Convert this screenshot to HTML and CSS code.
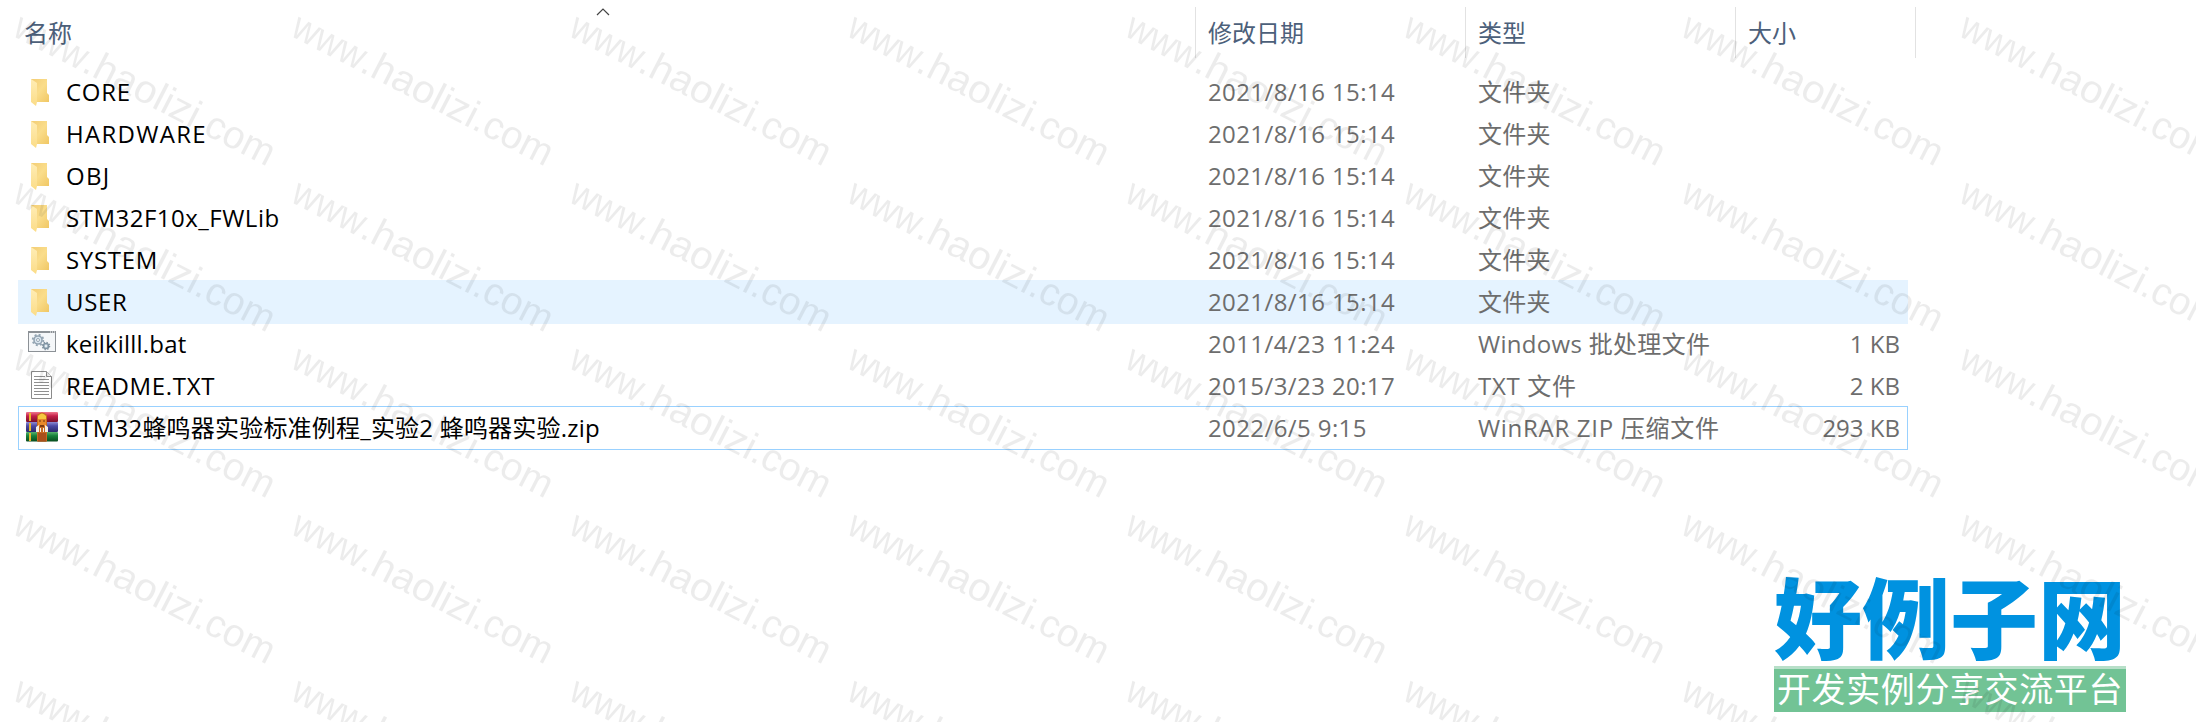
FILE: index.html
```
<!DOCTYPE html>
<html lang="zh-CN">
<head>
  <meta charset="UTF-8" />
  <meta name="viewport" content="width=device-width, initial-scale=1.0"/>
  <title>文件列表</title>
  <link rel="stylesheet" href="styles.css">
</head>
<body>
  <!-- icons -->
  <svg class="defs" width="0" height="0">
    <defs>
      <linearGradient id="folderBack" x1="0" y1="0" x2="1" y2="1">
        <stop offset="0" stop-color="#f3cd74"/>
        <stop offset="0.5" stop-color="#fadd8b"/>
        <stop offset="1" stop-color="#f0c764"/>
      </linearGradient>
      <linearGradient id="folderFront" x1="0" y1="0" x2="0" y2="1">
        <stop offset="0" stop-color="#ffedb5"/>
        <stop offset="1" stop-color="#fbdc87"/>
      </linearGradient>
      <linearGradient id="bookRed" x1="0" y1="0" x2="0" y2="1">
        <stop offset="0" stop-color="#f0788e"/>
        <stop offset="0.4" stop-color="#c4204a"/>
        <stop offset="1" stop-color="#78102c"/>
      </linearGradient>
      <linearGradient id="bookBlue" x1="0" y1="0" x2="0" y2="1">
        <stop offset="0" stop-color="#8c8ad2"/>
        <stop offset="0.4" stop-color="#4a48a4"/>
        <stop offset="1" stop-color="#29286a"/>
      </linearGradient>
      <linearGradient id="bookGreen" x1="0" y1="0" x2="0" y2="1">
        <stop offset="0" stop-color="#57b16d"/>
        <stop offset="0.4" stop-color="#16813a"/>
        <stop offset="1" stop-color="#074c1e"/>
      </linearGradient>
      <symbol id="folder" viewBox="0 0 32 32">
        <path d="M5 3h16v14l2 2v7H5z" fill="url(#folderBack)"/>
        <path d="M5 3l6 4v19l-1 4-5-4z" fill="url(#folderFront)"/>
      </symbol>
      <symbol id="bat" viewBox="0 2 32 32">
        <rect x="2.5" y="5.5" width="27" height="20" fill="#f5f7f9" stroke="#8c9196"/>
        <path d="M2 6h28" stroke="#8c9196" stroke-width="2"/>
        <path d="M24 6h1M26 6h1M28 6h1" stroke="#fff"/>
        <circle cx="12" cy="14" r="4" fill="#dbe7f0" stroke="#94a5b3" stroke-width="1.6"/>
        <circle cx="12" cy="14" r="5.3" fill="none" stroke="#94a5b3" stroke-width="1.8" stroke-dasharray="2 2.16"/>
        <circle cx="12" cy="14" r="1.5" fill="#fff" stroke="#94a5b3"/>
        <circle cx="20" cy="20" r="2.6" fill="#b4c7d5" stroke="#8093a1" stroke-width="1.4"/>
        <circle cx="20" cy="20" r="3.6" fill="none" stroke="#8093a1" stroke-width="1.4" stroke-dasharray="1.4 1.43"/>
        <circle cx="20" cy="20" r="0.9" fill="#fff"/>
      </symbol>
      <symbol id="txt" viewBox="0 2 32 32">
        <path d="M5.500 3.500h15l5 5v22h-20z" fill="#fff" stroke="#8a8a8a"/>
        <path d="M20.500 3.500v5h5" fill="#f2f2f2" stroke="#8a8a8a"/>
        <path d="M8 8.500h11M8 11.500h15M8 14.500h15M8 17.500h15M8 20.500h15M8 23.500h15M8 26.500h15" stroke="#8f8f8f"/>
      </symbol>
      <symbol id="zip" viewBox="0 1 32 32">
        <rect x="0" y="1" width="32" height="10" rx="1" fill="url(#bookRed)"/>
        <rect x="0" y="11" width="32" height="10" rx="1" fill="url(#bookBlue)"/>
        <rect x="0" y="21" width="32" height="9.500" rx="1" fill="url(#bookGreen)"/>
        <path d="M4 2v8M4 12v8M4 22v8" stroke="#e9b52c" stroke-width="2"/>
        <path d="M11 4q5-5 10 0v26.500H11z" fill="#c76a20"/>
        <path d="M12 5q4-5 8 0v4h-8z" fill="#f7c740"/>
        <rect x="12" y="8" width="8" height="7" fill="#e8892b"/>
        <path d="M13 10h2M17 10h2" stroke="#6b3310"/>
        <path d="M10 16l3-2v7h-3zM22 16l-3-2v7h3z" fill="#f3eee6"/>
        <path d="M14 14h4v2h-4z" fill="#7d3a12"/>
        <path d="M14 17h1v4h-1zM17 17h1v4h-1z" fill="#f3eee6"/>
        <rect x="12" y="22" width="8" height="8.500" fill="#a9501c"/>
      </symbol>
    </defs>
  </svg>

  <div class="explorer">
    <div class="header">
      <div class="head name">名称
        <svg class="sort" width="14" height="8" viewBox="0 0 14 8"><path d="M1 7l6-6 6 6" fill="none" stroke="#444" stroke-width="1.2"/></svg>
      </div>
      <div class="head">修改日期</div>
      <div class="head">类型</div>
      <div class="head last">大小</div>
    </div>

    <div class="list">
      <div class="row">
        <div class="file"><svg class="icon"><use href="#folder"/></svg><span class="label caps">CORE</span></div>
        <div class="date">2021/8/16 15:14</div><div class="type">文件夹</div><div class="size"></div>
      </div>
      <div class="row">
        <div class="file"><svg class="icon"><use href="#folder"/></svg><span class="label caps wide">HARDWARE</span></div>
        <div class="date">2021/8/16 15:14</div><div class="type">文件夹</div><div class="size"></div>
      </div>
      <div class="row">
        <div class="file"><svg class="icon"><use href="#folder"/></svg><span class="label caps wide">OBJ</span></div>
        <div class="date">2021/8/16 15:14</div><div class="type">文件夹</div><div class="size"></div>
      </div>
      <div class="row">
        <div class="file"><svg class="icon"><use href="#folder"/></svg><span class="label mixed">STM32F10x_FWLib</span></div>
        <div class="date">2021/8/16 15:14</div><div class="type">文件夹</div><div class="size"></div>
      </div>
      <div class="row">
        <div class="file"><svg class="icon"><use href="#folder"/></svg><span class="label caps">SYSTEM</span></div>
        <div class="date">2021/8/16 15:14</div><div class="type">文件夹</div><div class="size"></div>
      </div>
      <div class="row hover">
        <div class="file"><svg class="icon"><use href="#folder"/></svg><span class="label caps">USER</span></div>
        <div class="date">2021/8/16 15:14</div><div class="type">文件夹</div><div class="size"></div>
      </div>
      <div class="row">
        <div class="file"><svg class="icon"><use href="#bat"/></svg><span class="label">keilkilll.bat</span></div>
        <div class="date">2011/4/23 11:24</div><div class="type">Windows 批处理文件</div><div class="size">1 KB</div>
      </div>
      <div class="row">
        <div class="file"><svg class="icon"><use href="#txt"/></svg><span class="label caps">README.TXT</span></div>
        <div class="date">2015/3/23 20:17</div><div class="type caps">TXT 文件</div><div class="size">2 KB</div>
      </div>
      <div class="row focused">
        <div class="file"><svg class="icon"><use href="#zip"/></svg><span class="label">STM32蜂鸣器实验标准例程_实验2 蜂鸣器实验.zip</span></div>
        <div class="date">2022/6/5 9:15</div><div class="type caps">WinRAR ZIP 压缩文件</div><div class="size">293 KB</div>
      </div>
    </div>
  </div>

  <div class="logo">
    <div class="logo-name">好例子网</div>
    <div class="logo-slogan">开发实例分享交流平台</div>
  </div>

  <!-- repeated watermark -->
  <svg class="watermark" width="2196" height="722">
    <defs>
      <pattern id="mark" width="278" height="166" patternUnits="userSpaceOnUse">
        <g transform="translate(11 35) rotate(27.2)">
          <text x="0" y="0" textLength="78" lengthAdjust="spacingAndGlyphs">www</text>
          <text x="78" y="0" textLength="126" lengthAdjust="spacingAndGlyphs">.haolizi</text>
          <text x="204" y="0" textLength="84" lengthAdjust="spacingAndGlyphs">.com</text>
        </g>
      </pattern>
    </defs>
    <rect width="2196" height="722" fill="url(#mark)"/>
  </svg>
</body>
</html>
```
FILE: styles.css
```
body {
  margin: 0;
  position: relative;
  width: 2196px;
  height: 722px;
  overflow: hidden;
  background: #fff;
  font-family: "Open Sans", "Noto Sans CJK SC", sans-serif;
  font-size: 24px;
  color: #000;
}

.defs {
  position: absolute;
}

.explorer {
  width: 1898px;
  padding: 7px 0 0 18px;
}

.header {
  display: grid;
  grid-template-columns: 1178px 270px 270px 180px;
  height: 51px;
  margin-bottom: 12px;
}

.head {
  position: relative;
  box-sizing: border-box;
  padding-left: 12px;
  border-right: 1px solid #e2e2e2;
  line-height: 51px;
  color: #4c607a;
}

.head.name {
  padding-left: 6px;
}

.sort {
  position: absolute;
  left: 578px;
  top: 1px;
}

.row {
  display: grid;
  grid-template-columns: 1184px 270px 270px 1fr;
  align-items: center;
  box-sizing: border-box;
  width: 1890px;
  height: 44px;
  margin-bottom: -2px;
  padding: 0 7px 0 5px;
  border: 1px solid transparent;
  line-height: 42px;
  white-space: nowrap;
  color: #6d6d6d;
}

.row.hover {
  background: #e5f3ff;
}

.row.focused {
  border-color: #99d1ff;
}

.file {
  display: flex;
  align-items: center;
  gap: 8px;
  color: #000;
}

.icon {
  width: 32px;
  height: 32px;
  margin-left: 2px;
}

.label {
  letter-spacing: 0.2px;
}

.label.mixed {
  letter-spacing: 0.5px;
}

.label.caps {
  letter-spacing: 0.7px;
}

.label.wide {
  letter-spacing: 1.3px;
}

.date {
  letter-spacing: 0.4px;
}

.type {
  letter-spacing: 0.3px;
}

.type.caps {
  letter-spacing: 0.7px;
}

.size {
  text-align: right;
}

.logo {
  position: absolute;
  left: 1774px;
  top: 565px;
  width: 352px;
}

.logo-name {
  height: 101px;
  line-height: 98px;
  font-family: "Noto Sans CJK SC", sans-serif;
  font-weight: 900;
  font-size: 88px;
  color: #0092e0;
  white-space: nowrap;
}

.logo-slogan {
  box-sizing: border-box;
  height: 46px;
  border-top: 3px solid #b7dfc8;
  background: #72c395;
  background-clip: padding-box;
  line-height: 38px;
  font-family: "Noto Sans CJK SC", sans-serif;
  font-size: 34px;
  text-align: center;
  letter-spacing: 0.6px;
  white-space: nowrap;
  color: #fff;
}

.watermark {
  position: absolute;
  left: 0;
  top: 0;
  pointer-events: none;
}

.watermark text {
  font-family: "Liberation Sans", sans-serif;
  font-size: 39px;
  fill: #000;
  fill-opacity: 0.075;
}
```
